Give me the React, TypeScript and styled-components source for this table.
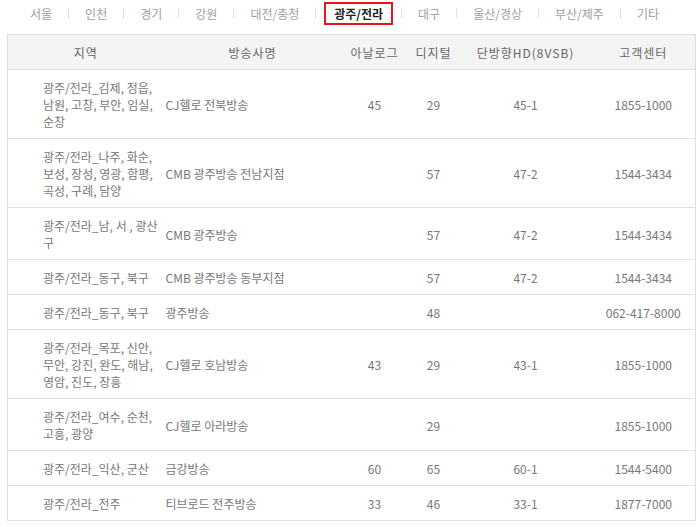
import { FC, Fragment } from "react";
import styled, { createGlobalStyle } from "styled-components";

const GlobalStyle = createGlobalStyle`
  body {
    margin: 0;
    background: #fff;
    font-family: "Noto Sans CJK KR", "Noto Sans", sans-serif;
  }
`;

interface Row {
  area: string[];
  name: string;
  analog: string;
  digital: string;
  hd: string;
  phone: string;
}

const regions = ["서울", "인천", "경기", "강원", "대전/충청", "광주/전라", "대구", "울산/경상", "부산/제주", "기타"];
const activeRegion = "광주/전라";

const rows: Row[] = [
  { area: ["광주/전라_김제, 정읍,", "남원, 고창, 부안, 임실,", "순창"], name: "CJ헬로 전북방송", analog: "45", digital: "29", hd: "45-1", phone: "1855-1000" },
  { area: ["광주/전라_나주, 화순,", "보성, 장성, 영광, 함평,", "곡성, 구례, 담양"], name: "CMB 광주방송 전남지점", analog: "", digital: "57", hd: "47-2", phone: "1544-3434" },
  { area: ["광주/전라_남, 서 , 광산", "구"], name: "CMB 광주방송", analog: "", digital: "57", hd: "47-2", phone: "1544-3434" },
  { area: ["광주/전라_동구, 북구"], name: "CMB 광주방송 동부지점", analog: "", digital: "57", hd: "47-2", phone: "1544-3434" },
  { area: ["광주/전라_동구, 북구"], name: "광주방송", analog: "", digital: "48", hd: "", phone: "062-417-8000" },
  { area: ["광주/전라_목포, 신안,", "무안, 강진, 완도, 해남,", "영암, 진도, 장흥"], name: "CJ헬로 호남방송", analog: "43", digital: "29", hd: "43-1", phone: "1855-1000" },
  { area: ["광주/전라_여수, 순천,", "고흥, 광양"], name: "CJ헬로 아라방송", analog: "", digital: "29", hd: "", phone: "1855-1000" },
  { area: ["광주/전라_익산, 군산"], name: "금강방송", analog: "60", digital: "65", hd: "60-1", phone: "1544-5400" },
  { area: ["광주/전라_전주"], name: "티브로드 전주방송", analog: "33", digital: "46", hd: "33-1", phone: "1877-7000" },
];

const Page = styled.div`
  width: 700px;
  padding: 2px 0 0 7px;
  box-sizing: border-box;
`;

const Tabs = styled.ul`
  display: flex;
  align-items: center;
  list-style: none;
  margin: 0 0 9px 15px;
  padding: 0;
  height: 23px;
`;

const Sep = styled.li`
  width: 1px;
  height: 9px;
  background: #ddd;
  margin: 0 8px;
`;

const Tab = styled.li<{ $active: boolean }>`
  box-sizing: border-box;
  height: 23px;
  line-height: ${(p) => (p.$active ? "19px" : "23px")};
  padding: 0 ${(p) => (p.$active ? "8px" : "8px")};
  border: ${(p) => (p.$active ? "2px solid #e8141b" : "none")};
  font-size: 12px;
  font-weight: ${(p) => (p.$active ? 700 : 400)};
  color: ${(p) => (p.$active ? "#222" : "#a0a0a0")};
  white-space: nowrap;
`;

const Table = styled.table`
  width: 688px;
  table-layout: fixed;
  border-collapse: collapse;
  border: 1px solid #dedede;
  font-size: 12px;
  color: #777;
`;

const Head = styled.th`
  height: 34px;
  padding: 0;
  background: #f4f4f4;
  border-bottom: 1px solid #dedede;
  font-weight: 400;
  color: #666;
  letter-spacing: 1px;
  text-align: center;
`;

const Tr = styled.tr`
  border-bottom: 1px solid #e2e2e2;
`;

const Cell = styled.td<{ $align?: "left" | "center"; $pad?: number }>`
  padding: 9px 0 8px ${(p) => p.$pad ?? 0}px;
  line-height: 17px;
  text-align: ${(p) => p.$align ?? "center"};
  vertical-align: middle;
  white-space: nowrap;
`;

const App: FC = () => {
  return (
    <Page>
      <GlobalStyle />
      <Tabs>
        {regions.map((r, i) => (
          <Fragment key={r}>
            {i > 0 && <Sep />}
            <Tab $active={r === activeRegion}>{r}</Tab>
          </Fragment>
        ))}
      </Tabs>
      <Table>
        <colgroup>
          <col style={{ width: 156 }} />
          <col style={{ width: 178 }} />
          <col style={{ width: 66 }} />
          <col style={{ width: 52 }} />
          <col style={{ width: 132 }} />
          <col style={{ width: 104 }} />
        </colgroup>
        <thead>
          <tr>
            <Head>지역</Head>
            <Head>방송사명</Head>
            <Head>아날로그</Head>
            <Head>디지털</Head>
            <Head>단방향HD(8VSB)</Head>
            <Head>고객센터</Head>
          </tr>
        </thead>
        <tbody>
          {rows.map((row, i) => (
            <Tr key={i}>
              <Cell $align="left" $pad={35}>
                {row.area.map((line, j) => (
                  <span key={j}>
                    {j > 0 && <br />}
                    {line}
                  </span>
                ))}
              </Cell>
              <Cell $align="left" $pad={2}>{row.name}</Cell>
              <Cell>{row.analog}</Cell>
              <Cell>{row.digital}</Cell>
              <Cell>{row.hd}</Cell>
              <Cell>{row.phone}</Cell>
            </Tr>
          ))}
        </tbody>
      </Table>
    </Page>
  );
};

export default App;
